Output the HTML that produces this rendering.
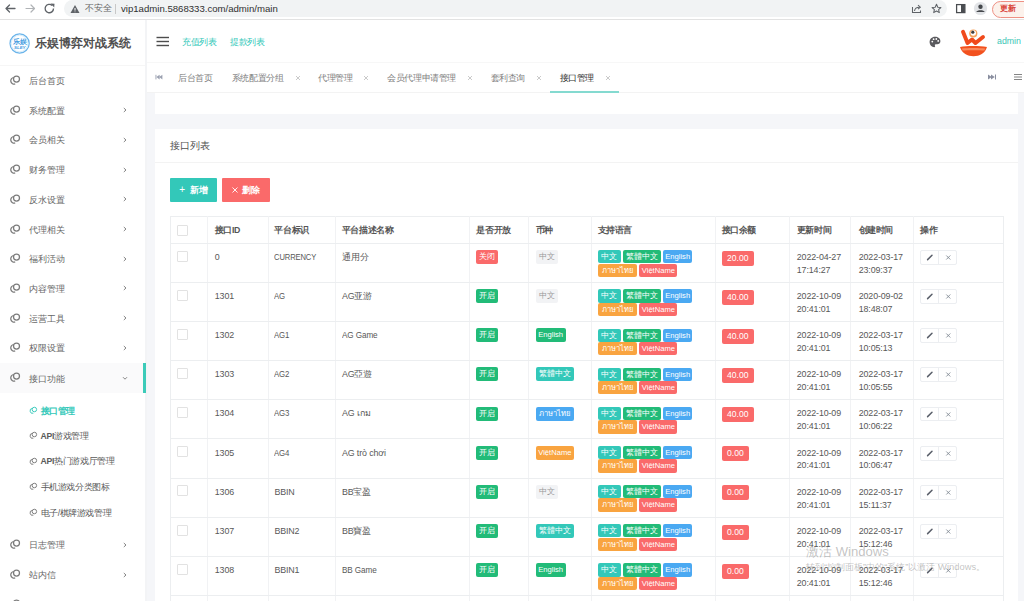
<!DOCTYPE html><html><head><meta charset="utf-8"><style>
html,body{margin:0;padding:0;width:1024px;height:601px;overflow:hidden;background:#fff;font-family:"Liberation Sans", sans-serif;}
#root{position:absolute;left:0;top:0;width:1024px;height:601px;overflow:hidden;}
.t{position:absolute;white-space:nowrap;}
.b{position:absolute;box-sizing:border-box;}
.tag{position:absolute;box-sizing:border-box;color:#fff;text-align:center;white-space:nowrap;border-radius:2px;}
svg{position:absolute;}
</style></head><body><div id="root">
<div class="b" style="left:0px;top:0px;width:1024.00px;height:20.00px;background:#fff;border-bottom:1px solid #e2e2e2;"></div>
<div class="b" style="left:64px;top:0px;width:883.00px;height:17.00px;background:#f1f3f4;border-radius:0 0 9px 9px;border-radius:9px;"></div>
<svg style="left:0;top:0" width="64" height="20"><g stroke="#5f6368" stroke-width="1.3" fill="none" stroke-linecap="round"><path d="M6 8.5 H15 M6 8.5 L9.5 5 M6 8.5 L9.5 12"/></g><g stroke="#b0b3b6" stroke-width="1.2" fill="none" stroke-linecap="round"><path d="M26 8.5 H34.5 M34.5 8.5 L31 5 M34.5 8.5 L31 12"/></g><g stroke="#5f6368" stroke-width="1.4" fill="none"><path d="M53.5 8.5 A4.2 4.2 0 1 1 52.2 5.5"/></g><path d="M50.5 3.5 L54.5 3.8 L54.2 7.5 Z" fill="#5f6368"/></svg>
<svg style="left:68px;top:2px" width="14" height="14"><path d="M7 3 L11.5 11 H2.5 Z" fill="#5f6368"/><path d="M7 6 V8.6 M7 9.6 V10.2" stroke="#fff" stroke-width="1"/></svg>
<div class="t" style="left:85px;top:2.00px;height:13.60px;line-height:13.60px;font-size:8.5px;color:#666;font-weight:normal;">不安全</div>
<div class="b" style="left:115px;top:4px;width:1.00px;height:9.50px;background:#c8c8c8;"></div>
<div class="t" style="left:121px;top:1.12px;height:15.36px;line-height:15.36px;font-size:9.6px;color:#303030;font-weight:normal;">vip1admin.5868333.com/admin/main</div>
<svg style="left:905px;top:0" width="119" height="20"><g stroke="#5f6368" stroke-width="1.05" fill="none"><path d="M7.5 7 V12.5 H15.5 V10.5"/><path d="M9.5 11 C9.8 8.3 11.5 7.2 14.5 7.2"/><path d="M13 5.2 L15.3 7.2 L13 9.2"/></g><path d="M31.5 4.3 L32.8 7.2 L35.9 7.5 L33.6 9.6 L34.3 12.6 L31.5 11 L28.7 12.6 L29.4 9.6 L27.1 7.5 L30.2 7.2 Z" stroke="#5f6368" stroke-width="1.05" fill="none" stroke-linejoin="round"/><rect x="51.6" y="4.6" width="8.3" height="8" stroke="#4a4d51" stroke-width="1.25" fill="none"/><rect x="56" y="4.6" width="3.9" height="8" fill="#4a4d51"/><circle cx="75.5" cy="8.5" r="6.6" fill="#e2e4e7"/><circle cx="75.5" cy="6.8" r="2.2" fill="#45484c"/><path d="M71.3 12 C71.8 9.6 79.2 9.6 79.7 12 Z" fill="#45484c"/></svg>
<div class="b" style="left:992px;top:0.5px;width:68.00px;height:17.00px;background:#fcf2ec;border:1.3px solid #ee9184;border-radius:9px;"></div>
<div class="t" style="left:1000px;top:2.34px;height:13.12px;line-height:13.12px;font-size:8.2px;color:#d9453a;font-weight:bold;">更新</div>
<div class="b" style="left:0px;top:20px;width:146.00px;height:581.00px;background:#fff;"></div>
<div class="b" style="left:145px;top:20px;width:2.00px;height:581.00px;background:#f3f4f6;"></div>
<div class="b" style="left:0px;top:65px;width:145.00px;height:1.00px;background:#f6f6f6;"></div>
<svg style="left:8px;top:32px" width="24" height="24"><circle cx="11.6" cy="11.5" r="9.6" fill="#fff" stroke="#6ab4ea" stroke-width="1.2"/><circle cx="11.6" cy="11.5" r="8.3" fill="none" stroke="#bfe0f7" stroke-width="0.6"/><text x="11.8" y="11.6" font-size="6.6" text-anchor="middle" fill="#3f9be0" font-weight="bold">乐娱</text><text x="11.8" y="16.9" font-size="4.4" text-anchor="middle" fill="#3f9be0" font-weight="bold" font-style="italic">SLEY</text></svg>
<div class="t" style="left:35px;top:33.54px;height:19.52px;line-height:19.52px;font-size:12.2px;color:#505050;font-weight:bold;">乐娱博弈对战系统</div>
<svg style="left:7.5px;top:72.5px" width="16" height="16"><g fill="none" stroke="#7c7c7c" stroke-width="1.25"><circle cx="8.50" cy="6.00" r="3.00"/><path d="M5.77 4.50 A3.30 3.30 0 1 0 7.19 10.89"/></g></svg>
<div class="t" style="left:29.2px;top:74.52px;height:13.76px;line-height:13.76px;font-size:8.6px;color:#666;font-weight:normal;letter-spacing:-0.2px;">后台首页</div>
<svg style="left:7.5px;top:102.5px" width="16" height="16"><g fill="none" stroke="#7c7c7c" stroke-width="1.25"><circle cx="8.50" cy="6.00" r="3.00"/><path d="M5.77 4.50 A3.30 3.30 0 1 0 7.19 10.89"/></g></svg>
<div class="t" style="left:29.2px;top:104.52px;height:13.76px;line-height:13.76px;font-size:8.6px;color:#666;font-weight:normal;letter-spacing:-0.2px;">系统配置</div>
<svg style="left:121px;top:106.0px" width="8" height="8"><path d="M2.8 2 L5 4 L2.8 6" stroke="#777" stroke-width="0.9" fill="none"/></svg>
<svg style="left:7.5px;top:132.2px" width="16" height="16"><g fill="none" stroke="#7c7c7c" stroke-width="1.25"><circle cx="8.50" cy="6.00" r="3.00"/><path d="M5.77 4.50 A3.30 3.30 0 1 0 7.19 10.89"/></g></svg>
<div class="t" style="left:29.2px;top:134.22px;height:13.76px;line-height:13.76px;font-size:8.6px;color:#666;font-weight:normal;letter-spacing:-0.2px;">会员相关</div>
<svg style="left:121px;top:135.7px" width="8" height="8"><path d="M2.8 2 L5 4 L2.8 6" stroke="#777" stroke-width="0.9" fill="none"/></svg>
<svg style="left:7.5px;top:162px" width="16" height="16"><g fill="none" stroke="#7c7c7c" stroke-width="1.25"><circle cx="8.50" cy="6.00" r="3.00"/><path d="M5.77 4.50 A3.30 3.30 0 1 0 7.19 10.89"/></g></svg>
<div class="t" style="left:29.2px;top:164.02px;height:13.76px;line-height:13.76px;font-size:8.6px;color:#666;font-weight:normal;letter-spacing:-0.2px;">财务管理</div>
<svg style="left:121px;top:165.5px" width="8" height="8"><path d="M2.8 2 L5 4 L2.8 6" stroke="#777" stroke-width="0.9" fill="none"/></svg>
<svg style="left:7.5px;top:191.8px" width="16" height="16"><g fill="none" stroke="#7c7c7c" stroke-width="1.25"><circle cx="8.50" cy="6.00" r="3.00"/><path d="M5.77 4.50 A3.30 3.30 0 1 0 7.19 10.89"/></g></svg>
<div class="t" style="left:29.2px;top:193.82px;height:13.76px;line-height:13.76px;font-size:8.6px;color:#666;font-weight:normal;letter-spacing:-0.2px;">反水设置</div>
<svg style="left:121px;top:195.3px" width="8" height="8"><path d="M2.8 2 L5 4 L2.8 6" stroke="#777" stroke-width="0.9" fill="none"/></svg>
<svg style="left:7.5px;top:221.5px" width="16" height="16"><g fill="none" stroke="#7c7c7c" stroke-width="1.25"><circle cx="8.50" cy="6.00" r="3.00"/><path d="M5.77 4.50 A3.30 3.30 0 1 0 7.19 10.89"/></g></svg>
<div class="t" style="left:29.2px;top:223.52px;height:13.76px;line-height:13.76px;font-size:8.6px;color:#666;font-weight:normal;letter-spacing:-0.2px;">代理相关</div>
<svg style="left:121px;top:225.0px" width="8" height="8"><path d="M2.8 2 L5 4 L2.8 6" stroke="#777" stroke-width="0.9" fill="none"/></svg>
<svg style="left:7.5px;top:251.2px" width="16" height="16"><g fill="none" stroke="#7c7c7c" stroke-width="1.25"><circle cx="8.50" cy="6.00" r="3.00"/><path d="M5.77 4.50 A3.30 3.30 0 1 0 7.19 10.89"/></g></svg>
<div class="t" style="left:29.2px;top:253.22px;height:13.76px;line-height:13.76px;font-size:8.6px;color:#666;font-weight:normal;letter-spacing:-0.2px;">福利活动</div>
<svg style="left:121px;top:254.7px" width="8" height="8"><path d="M2.8 2 L5 4 L2.8 6" stroke="#777" stroke-width="0.9" fill="none"/></svg>
<svg style="left:7.5px;top:280.9px" width="16" height="16"><g fill="none" stroke="#7c7c7c" stroke-width="1.25"><circle cx="8.50" cy="6.00" r="3.00"/><path d="M5.77 4.50 A3.30 3.30 0 1 0 7.19 10.89"/></g></svg>
<div class="t" style="left:29.2px;top:282.92px;height:13.76px;line-height:13.76px;font-size:8.6px;color:#666;font-weight:normal;letter-spacing:-0.2px;">内容管理</div>
<svg style="left:121px;top:284.4px" width="8" height="8"><path d="M2.8 2 L5 4 L2.8 6" stroke="#777" stroke-width="0.9" fill="none"/></svg>
<svg style="left:7.5px;top:310.5px" width="16" height="16"><g fill="none" stroke="#7c7c7c" stroke-width="1.25"><circle cx="8.50" cy="6.00" r="3.00"/><path d="M5.77 4.50 A3.30 3.30 0 1 0 7.19 10.89"/></g></svg>
<div class="t" style="left:29.2px;top:312.52px;height:13.76px;line-height:13.76px;font-size:8.6px;color:#666;font-weight:normal;letter-spacing:-0.2px;">运营工具</div>
<svg style="left:121px;top:314.0px" width="8" height="8"><path d="M2.8 2 L5 4 L2.8 6" stroke="#777" stroke-width="0.9" fill="none"/></svg>
<svg style="left:7.5px;top:340.2px" width="16" height="16"><g fill="none" stroke="#7c7c7c" stroke-width="1.25"><circle cx="8.50" cy="6.00" r="3.00"/><path d="M5.77 4.50 A3.30 3.30 0 1 0 7.19 10.89"/></g></svg>
<div class="t" style="left:29.2px;top:342.22px;height:13.76px;line-height:13.76px;font-size:8.6px;color:#666;font-weight:normal;letter-spacing:-0.2px;">权限设置</div>
<svg style="left:121px;top:343.7px" width="8" height="8"><path d="M2.8 2 L5 4 L2.8 6" stroke="#777" stroke-width="0.9" fill="none"/></svg>
<div class="b" style="left:0px;top:362.8px;width:145.00px;height:29.80px;background:#fafafb;"></div>
<div class="b" style="left:143.4px;top:362.8px;width:2.30px;height:29.80px;background:#3ccbb9;"></div>
<svg style="left:7.5px;top:370.3px" width="16" height="16"><g fill="none" stroke="#7c7c7c" stroke-width="1.25"><circle cx="8.50" cy="6.00" r="3.00"/><path d="M5.77 4.50 A3.30 3.30 0 1 0 7.19 10.89"/></g></svg>
<div class="t" style="left:29.2px;top:373.02px;height:13.76px;line-height:13.76px;font-size:8.6px;color:#666;font-weight:normal;letter-spacing:-0.2px;">接口功能</div>
<svg style="left:121.3px;top:374px" width="8" height="8"><path d="M2 3.2 L4 5.2 L6 3.2" stroke="#777" stroke-width="0.9" fill="none"/></svg>
<svg style="left:25.5px;top:403px" width="16" height="16"><g fill="none" stroke="#33c8b9" stroke-width="0.94"><circle cx="8.38" cy="6.50" r="2.25"/><path d="M6.33 5.38 A2.47 2.47 0 1 0 7.39 10.17"/></g></svg>
<div class="t" style="left:40.5px;top:404.58px;height:13.84px;line-height:13.84px;font-size:8.65px;color:#33c8b9;font-weight:bold;letter-spacing:-0.4px;">接口管理</div>
<svg style="left:25.5px;top:428.3px" width="16" height="16"><g fill="none" stroke="#777" stroke-width="0.94"><circle cx="8.38" cy="6.50" r="2.25"/><path d="M6.33 5.38 A2.47 2.47 0 1 0 7.39 10.17"/></g></svg>
<div class="t" style="left:40.5px;top:429.88px;height:13.84px;line-height:13.84px;font-size:8.65px;color:#5a5a5a;font-weight:normal;letter-spacing:-0.4px;"><span style="letter-spacing:-0.2px;font-weight:bold">API</span>游戏管理</div>
<svg style="left:25.5px;top:453.5px" width="16" height="16"><g fill="none" stroke="#777" stroke-width="0.94"><circle cx="8.38" cy="6.50" r="2.25"/><path d="M6.33 5.38 A2.47 2.47 0 1 0 7.39 10.17"/></g></svg>
<div class="t" style="left:40.5px;top:455.08px;height:13.84px;line-height:13.84px;font-size:8.65px;color:#5a5a5a;font-weight:normal;letter-spacing:-0.4px;"><span style="letter-spacing:-0.2px;font-weight:bold">API</span>热门游戏厅管理</div>
<svg style="left:25.5px;top:479px" width="16" height="16"><g fill="none" stroke="#777" stroke-width="0.94"><circle cx="8.38" cy="6.50" r="2.25"/><path d="M6.33 5.38 A2.47 2.47 0 1 0 7.39 10.17"/></g></svg>
<div class="t" style="left:40.5px;top:480.58px;height:13.84px;line-height:13.84px;font-size:8.65px;color:#5a5a5a;font-weight:normal;letter-spacing:-0.4px;">手机游戏分类图标</div>
<svg style="left:25.5px;top:505px" width="16" height="16"><g fill="none" stroke="#777" stroke-width="0.94"><circle cx="8.38" cy="6.50" r="2.25"/><path d="M6.33 5.38 A2.47 2.47 0 1 0 7.39 10.17"/></g></svg>
<div class="t" style="left:40.5px;top:506.58px;height:13.84px;line-height:13.84px;font-size:8.65px;color:#5a5a5a;font-weight:normal;letter-spacing:-0.4px;">电子/棋牌游戏管理</div>
<svg style="left:7.5px;top:537.2px" width="16" height="16"><g fill="none" stroke="#7c7c7c" stroke-width="1.25"><circle cx="8.50" cy="6.00" r="3.00"/><path d="M5.77 4.50 A3.30 3.30 0 1 0 7.19 10.89"/></g></svg>
<div class="t" style="left:29.2px;top:539.22px;height:13.76px;line-height:13.76px;font-size:8.6px;color:#666;font-weight:normal;letter-spacing:-0.2px;">日志管理</div>
<svg style="left:121px;top:540.7px" width="8" height="8"><path d="M2.8 2 L5 4 L2.8 6" stroke="#777" stroke-width="0.9" fill="none"/></svg>
<svg style="left:7.5px;top:567px" width="16" height="16"><g fill="none" stroke="#7c7c7c" stroke-width="1.25"><circle cx="8.50" cy="6.00" r="3.00"/><path d="M5.77 4.50 A3.30 3.30 0 1 0 7.19 10.89"/></g></svg>
<div class="t" style="left:29.2px;top:569.02px;height:13.76px;line-height:13.76px;font-size:8.6px;color:#666;font-weight:normal;letter-spacing:-0.2px;">站内信</div>
<svg style="left:121px;top:570.5px" width="8" height="8"><path d="M2.8 2 L5 4 L2.8 6" stroke="#777" stroke-width="0.9" fill="none"/></svg>
<svg style="left:7.5px;top:596.8px" width="16" height="16"><g fill="none" stroke="#7c7c7c" stroke-width="1.25"><circle cx="8.50" cy="6.00" r="3.00"/><path d="M5.77 4.50 A3.30 3.30 0 1 0 7.19 10.89"/></g></svg>
<div class="b" style="left:146.5px;top:62.3px;width:877.50px;height:1.20px;background:#f7f7f7;"></div>
<svg style="left:154px;top:34px" width="18" height="14"><g stroke="#4d4d4d" stroke-width="1.4"><path d="M2.5 3.5 H15"/><path d="M2.5 7.5 H15"/><path d="M2.5 11.5 H15"/></g></svg>
<div class="t" style="left:182px;top:35.52px;height:13.76px;line-height:13.76px;font-size:8.6px;color:#33c8b9;font-weight:normal;letter-spacing:-0.4px;">充值列表</div>
<div class="t" style="left:230px;top:35.52px;height:13.76px;line-height:13.76px;font-size:8.6px;color:#33c8b9;font-weight:normal;letter-spacing:-0.4px;">提款列表</div>
<svg style="left:928px;top:35px" width="14" height="14"><path d="M7 1.8 C3.8 1.8 1.6 4.2 1.6 7 C1.6 9.9 3.8 12.2 6.3 12.2 C7.3 12.2 7.3 11.2 6.9 10.6 C6.5 10 6.9 9.2 7.8 9.2 H9.3 C11 9.2 12.4 8 12.4 6.2 C12.4 3.6 10 1.8 7 1.8 Z" fill="#5a5a5e"/><circle cx="4.3" cy="6.6" r="0.9" fill="#fff"/><circle cx="5.6" cy="4.2" r="0.9" fill="#fff"/><circle cx="8.3" cy="4" r="0.9" fill="#fff"/><circle cx="10.2" cy="5.9" r="0.9" fill="#fff"/></svg>
<svg style="left:956px;top:27px" width="34" height="32"><path d="M7 4.8 L11.5 16 L16 12.5 L19.5 16 L27 10" stroke="#f04a1c" stroke-width="3.9" fill="none" stroke-linecap="round" stroke-linejoin="round"/><circle cx="17.3" cy="6.5" r="4.1" fill="#f7a35c"/><circle cx="17.3" cy="6" r="2.7" fill="#fff"/><circle cx="16.8" cy="5.2" r="1.6" fill="#3d3d3d"/><path d="M4 20 C11 18.8 23 18.8 31 20 C29 26.5 23.5 29.2 17.5 29.2 C11.5 29.2 6 26.5 4 20 Z" fill="#f2511e"/><path d="M6 21.6 C12 20.8 23 20.8 29 21.6 L28.5 23.6 C23 23 12 23 6.5 23.6 Z" fill="#f98a5e"/></svg>
<div class="t" style="left:997px;top:34.46px;height:14.08px;line-height:14.08px;font-size:8.8px;color:#3cc6b6;font-weight:normal;">admin</div>
<div class="b" style="left:147px;top:63.5px;width:877.00px;height:28.50px;background:#fff;"></div>
<div class="b" style="left:146.5px;top:91.5px;width:877.50px;height:1.00px;background:#f3f3f3;"></div>
<svg style="left:153px;top:73px" width="12" height="9"><g fill="#9aa0b0"><rect x="2.5" y="1.8" width="0.9" height="4.6"/><path d="M6.6 1.8 L3.4 4.1 L6.6 6.4 Z"/><path d="M9.4 1.8 L6.2 4.1 L9.4 6.4 Z"/></g></svg>
<div class="t" style="left:178px;top:71.92px;height:13.76px;line-height:13.76px;font-size:8.6px;color:#808080;font-weight:normal;letter-spacing:-0.42px;">后台首页</div>
<div class="t" style="left:231.8px;top:71.92px;height:13.76px;line-height:13.76px;font-size:8.6px;color:#808080;font-weight:normal;letter-spacing:-0.42px;">系统配置分组</div>
<svg style="left:294.7px;top:74.5px" width="6" height="6"><path d="M1 1 L5 5 M5 1 L1 5" stroke="#b8b8b8" stroke-width="0.75"/></svg>
<div class="t" style="left:318px;top:71.92px;height:13.76px;line-height:13.76px;font-size:8.6px;color:#808080;font-weight:normal;letter-spacing:-0.42px;">代理管理</div>
<svg style="left:363px;top:74.5px" width="6" height="6"><path d="M1 1 L5 5 M5 1 L1 5" stroke="#b8b8b8" stroke-width="0.75"/></svg>
<div class="t" style="left:387.3px;top:71.92px;height:13.76px;line-height:13.76px;font-size:8.6px;color:#808080;font-weight:normal;letter-spacing:-0.42px;">会员代理申请管理</div>
<svg style="left:467px;top:74.5px" width="6" height="6"><path d="M1 1 L5 5 M5 1 L1 5" stroke="#b8b8b8" stroke-width="0.75"/></svg>
<div class="t" style="left:490.7px;top:71.92px;height:13.76px;line-height:13.76px;font-size:8.6px;color:#808080;font-weight:normal;letter-spacing:-0.42px;">套利查询</div>
<svg style="left:536px;top:74.5px" width="6" height="6"><path d="M1 1 L5 5 M5 1 L1 5" stroke="#b8b8b8" stroke-width="0.75"/></svg>
<div class="t" style="left:559.6px;top:71.92px;height:13.76px;line-height:13.76px;font-size:8.6px;color:#333;font-weight:normal;letter-spacing:-0.42px;">接口管理</div>
<svg style="left:604.5px;top:74.5px" width="6" height="6"><path d="M1 1 L5 5 M5 1 L1 5" stroke="#b8b8b8" stroke-width="0.75"/></svg>
<div class="b" style="left:550px;top:91px;width:68.50px;height:1.80px;background:#84dad0;"></div>
<svg style="left:986px;top:73px" width="12" height="9"><g fill="#8a8fa0"><rect x="9" y="1.5" width="1" height="5"/><path d="M5 1.5 L8.8 4 L5 6.5 Z"/><path d="M2 1.5 L5.8 4 L2 6.5 Z"/></g></svg>
<svg style="left:1012px;top:72px" width="12" height="10"><g stroke="#777" stroke-width="0.9"><path d="M2 2.5 H10 M2 5 H10 M2 7.5 H10"/></g></svg>
<div class="b" style="left:146.5px;top:92.5px;width:877.50px;height:508.50px;background:#f5f6f9;"></div>
<div class="b" style="left:155px;top:92.5px;width:863.00px;height:21.50px;background:#fff;"></div>
<div class="b" style="left:155px;top:129px;width:863.00px;height:521.00px;background:#fff;"></div>
<div class="t" style="left:170px;top:138.30px;height:16.00px;line-height:16.00px;font-size:10px;color:#505050;font-weight:normal;">接口列表</div>
<div class="b" style="left:155px;top:161.6px;width:863.00px;height:1.00px;background:#f3f3f3;"></div>
<div class="b" style="left:170px;top:178px;width:46.60px;height:23.60px;background:#33c8b9;border-radius:1px;"></div>
<div class="t" style="left:179.2px;top:181.60px;height:16.00px;line-height:16.00px;font-size:10px;color:#fff;font-weight:normal;">+</div>
<div class="t" style="left:190px;top:182.76px;height:14.08px;line-height:14.08px;font-size:8.8px;color:#fff;font-weight:bold;">新增</div>
<div class="b" style="left:222.4px;top:178px;width:47.20px;height:23.60px;background:#fa6a6a;border-radius:1px;"></div>
<svg style="left:230.5px;top:185.8px" width="8" height="8"><path d="M1.5 1.5 L6.5 6.5 M6.5 1.5 L1.5 6.5" stroke="#fff" stroke-width="0.9"/></svg>
<div class="t" style="left:242px;top:182.76px;height:14.08px;line-height:14.08px;font-size:8.8px;color:#fff;font-weight:bold;">删除</div>
<div class="b" style="left:170px;top:216.2px;width:834.40px;height:433.80px;border:1px solid #eceef0;border-bottom:none;"></div>
<div class="b" style="left:207.2px;top:216.2px;width:1.00px;height:433.80px;background:#f1f2f4;"></div>
<div class="b" style="left:267.9px;top:216.2px;width:1.00px;height:433.80px;background:#f1f2f4;"></div>
<div class="b" style="left:334.9px;top:216.2px;width:1.00px;height:433.80px;background:#f1f2f4;"></div>
<div class="b" style="left:469.1px;top:216.2px;width:1.00px;height:433.80px;background:#f1f2f4;"></div>
<div class="b" style="left:528.0px;top:216.2px;width:1.00px;height:433.80px;background:#f1f2f4;"></div>
<div class="b" style="left:590.6px;top:216.2px;width:1.00px;height:433.80px;background:#f1f2f4;"></div>
<div class="b" style="left:715.2px;top:216.2px;width:1.00px;height:433.80px;background:#f1f2f4;"></div>
<div class="b" style="left:788.8px;top:216.2px;width:1.00px;height:433.80px;background:#f1f2f4;"></div>
<div class="b" style="left:850.45px;top:216.2px;width:1.00px;height:433.80px;background:#f1f2f4;"></div>
<div class="b" style="left:913.4px;top:216.2px;width:1.00px;height:433.80px;background:#f1f2f4;"></div>
<div class="b" style="left:170px;top:242.8px;width:834.40px;height:1.00px;background:#eceef0;"></div>
<div class="b" style="left:170px;top:281.93px;width:834.40px;height:1.00px;background:#eceef0;"></div>
<div class="b" style="left:170px;top:321.06px;width:834.40px;height:1.00px;background:#eceef0;"></div>
<div class="b" style="left:170px;top:360.19000000000005px;width:834.40px;height:1.00px;background:#eceef0;"></div>
<div class="b" style="left:170px;top:399.32000000000005px;width:834.40px;height:1.00px;background:#eceef0;"></div>
<div class="b" style="left:170px;top:438.45000000000005px;width:834.40px;height:1.00px;background:#eceef0;"></div>
<div class="b" style="left:170px;top:477.58000000000004px;width:834.40px;height:1.00px;background:#eceef0;"></div>
<div class="b" style="left:170px;top:516.71px;width:834.40px;height:1.00px;background:#eceef0;"></div>
<div class="b" style="left:170px;top:555.84px;width:834.40px;height:1.00px;background:#eceef0;"></div>
<div class="b" style="left:170px;top:594.97px;width:834.40px;height:1.00px;background:#eceef0;"></div>
<div class="b" style="left:176.7px;top:224.8px;width:11.00px;height:11.00px;border:1px solid #e2e2e2;background:#fff;border-radius:1px;"></div>
<div class="t" style="left:214.8px;top:223.00px;height:14.00px;line-height:14.00px;font-size:8.75px;color:#555;font-weight:bold;letter-spacing:-0.4px;">接口ID</div>
<div class="t" style="left:274.4px;top:223.00px;height:14.00px;line-height:14.00px;font-size:8.75px;color:#555;font-weight:bold;letter-spacing:-0.4px;">平台标识</div>
<div class="t" style="left:341.9px;top:223.00px;height:14.00px;line-height:14.00px;font-size:8.75px;color:#555;font-weight:bold;letter-spacing:-0.4px;">平台描述名称</div>
<div class="t" style="left:476.4px;top:223.00px;height:14.00px;line-height:14.00px;font-size:8.75px;color:#555;font-weight:bold;letter-spacing:-0.4px;">是否开放</div>
<div class="t" style="left:535.8px;top:223.00px;height:14.00px;line-height:14.00px;font-size:8.75px;color:#555;font-weight:bold;letter-spacing:-0.4px;">币种</div>
<div class="t" style="left:597.5px;top:223.00px;height:14.00px;line-height:14.00px;font-size:8.75px;color:#555;font-weight:bold;letter-spacing:-0.4px;">支持语言</div>
<div class="t" style="left:721.5px;top:223.00px;height:14.00px;line-height:14.00px;font-size:8.75px;color:#555;font-weight:bold;letter-spacing:-0.4px;">接口余额</div>
<div class="t" style="left:796.8px;top:223.00px;height:14.00px;line-height:14.00px;font-size:8.75px;color:#555;font-weight:bold;letter-spacing:-0.4px;">更新时间</div>
<div class="t" style="left:858.7px;top:223.00px;height:14.00px;line-height:14.00px;font-size:8.75px;color:#555;font-weight:bold;letter-spacing:-0.4px;">创建时间</div>
<div class="t" style="left:920.2px;top:223.00px;height:14.00px;line-height:14.00px;font-size:8.75px;color:#555;font-weight:bold;letter-spacing:-0.4px;">操作</div>
<div class="b" style="left:176.7px;top:250.60000000000002px;width:11.00px;height:11.00px;border:1px solid #e2e2e2;background:#fff;border-radius:1px;"></div>
<div class="t" style="left:214.8px;top:249.88px;height:14.24px;line-height:14.24px;font-size:8.9px;color:#585858;font-weight:normal;letter-spacing:-0.12px;">0</div>
<div class="t" style="left:274.4px;top:249.88px;height:14.24px;line-height:14.24px;font-size:8.9px;color:#585858;font-weight:normal;letter-spacing:-0.12px;transform:scaleX(0.855);transform-origin:0 0;">CURRENCY</div>
<div class="t" style="left:341.9px;top:249.88px;height:14.24px;line-height:14.24px;font-size:8.9px;color:#585858;font-weight:normal;letter-spacing:-0.12px;">通用分</div>
<div class="tag" style="left:476px;top:250.00px;width:22.40px;height:14.00px;line-height:14.00px;font-size:7.6px;background:#fa6a6a;color:#fff;">关闭</div>
<div class="tag" style="left:535.5px;top:250.00px;width:22.50px;height:14.00px;line-height:14.00px;font-size:7.6px;background:#f2f3f5;color:#999;">中文</div>
<div class="tag" style="left:597.5px;top:250.30px;width:23.20px;height:13.20px;line-height:13.20px;font-size:7.6px;background:#33c8b9;color:#fff;">中文</div>
<div class="tag" style="left:622.9px;top:250.30px;width:38.00px;height:13.20px;line-height:13.20px;font-size:7.6px;background:#22bb78;color:#fff;">繁體中文</div>
<div class="tag" style="left:663px;top:250.30px;width:29.40px;height:13.20px;line-height:13.20px;font-size:7.6px;background:#4aa9f2;color:#fff;">English</div>
<div class="tag" style="left:597.5px;top:263.60px;width:39.30px;height:13.40px;line-height:13.40px;font-size:7.6px;background:#f9a440;color:#fff;">ภาษาไทย</div>
<div class="tag" style="left:639.3px;top:263.60px;width:38.20px;height:13.40px;line-height:13.40px;font-size:7.6px;background:#fa6a6a;color:#fff;">ViệtName</div>
<div class="tag" style="left:721.5px;top:250.60px;width:32.50px;height:15.00px;line-height:15.00px;font-size:8.6px;background:#fa6a6a;color:#fff;">20.00</div>
<div class="t" style="left:796.8px;top:249.88px;height:14.24px;line-height:14.24px;font-size:8.9px;color:#585858;font-weight:normal;letter-spacing:-0.12px;">2022-04-27</div>
<div class="t" style="left:796.8px;top:262.78px;height:14.24px;line-height:14.24px;font-size:8.9px;color:#585858;font-weight:normal;letter-spacing:-0.12px;">17:14:27</div>
<div class="t" style="left:858.7px;top:249.88px;height:14.24px;line-height:14.24px;font-size:8.9px;color:#585858;font-weight:normal;letter-spacing:-0.12px;">2022-03-17</div>
<div class="t" style="left:858.7px;top:262.78px;height:14.24px;line-height:14.24px;font-size:8.9px;color:#585858;font-weight:normal;letter-spacing:-0.12px;">23:09:37</div>
<div class="b" style="left:920.4px;top:250.10000000000002px;width:37.10px;height:14.80px;border:1px solid #eceef1;border-radius:2px;background:#fff;"></div>
<div class="b" style="left:938.3px;top:250.10000000000002px;width:1.00px;height:14.80px;background:#eceef1;"></div>
<svg style="left:920px;top:250.10px" width="38" height="15"><path d="M7.6 9.6 L12 5.2" stroke="#5a5f6a" stroke-width="1.5" stroke-linecap="round"/><path d="M26.3 5.5 L30.3 9.5 M30.3 5.5 L26.3 9.5" stroke="#7d8590" stroke-width="0.85"/></svg>
<div class="b" style="left:176.7px;top:289.73px;width:11.00px;height:11.00px;border:1px solid #e2e2e2;background:#fff;border-radius:1px;"></div>
<div class="t" style="left:214.8px;top:289.01px;height:14.24px;line-height:14.24px;font-size:8.9px;color:#585858;font-weight:normal;letter-spacing:-0.12px;">1301</div>
<div class="t" style="left:274.4px;top:289.01px;height:14.24px;line-height:14.24px;font-size:8.9px;color:#585858;font-weight:normal;letter-spacing:-0.12px;transform:scaleX(0.88);transform-origin:0 0;">AG</div>
<div class="t" style="left:341.9px;top:289.01px;height:14.24px;line-height:14.24px;font-size:8.9px;color:#585858;font-weight:normal;letter-spacing:-0.12px;">AG亚游</div>
<div class="tag" style="left:476px;top:289.13px;width:22.40px;height:14.00px;line-height:14.00px;font-size:7.6px;background:#22bb78;color:#fff;">开启</div>
<div class="tag" style="left:535.5px;top:289.13px;width:22.50px;height:14.00px;line-height:14.00px;font-size:7.6px;background:#f2f3f5;color:#999;">中文</div>
<div class="tag" style="left:597.5px;top:289.43px;width:23.20px;height:13.20px;line-height:13.20px;font-size:7.6px;background:#33c8b9;color:#fff;">中文</div>
<div class="tag" style="left:622.9px;top:289.43px;width:38.00px;height:13.20px;line-height:13.20px;font-size:7.6px;background:#22bb78;color:#fff;">繁體中文</div>
<div class="tag" style="left:663px;top:289.43px;width:29.40px;height:13.20px;line-height:13.20px;font-size:7.6px;background:#4aa9f2;color:#fff;">English</div>
<div class="tag" style="left:597.5px;top:302.73px;width:39.30px;height:13.40px;line-height:13.40px;font-size:7.6px;background:#f9a440;color:#fff;">ภาษาไทย</div>
<div class="tag" style="left:639.3px;top:302.73px;width:38.20px;height:13.40px;line-height:13.40px;font-size:7.6px;background:#fa6a6a;color:#fff;">ViệtName</div>
<div class="tag" style="left:721.5px;top:289.73px;width:32.50px;height:15.00px;line-height:15.00px;font-size:8.6px;background:#fa6a6a;color:#fff;">40.00</div>
<div class="t" style="left:796.8px;top:289.01px;height:14.24px;line-height:14.24px;font-size:8.9px;color:#585858;font-weight:normal;letter-spacing:-0.12px;">2022-10-09</div>
<div class="t" style="left:796.8px;top:301.91px;height:14.24px;line-height:14.24px;font-size:8.9px;color:#585858;font-weight:normal;letter-spacing:-0.12px;">20:41:01</div>
<div class="t" style="left:858.7px;top:289.01px;height:14.24px;line-height:14.24px;font-size:8.9px;color:#585858;font-weight:normal;letter-spacing:-0.12px;">2020-09-02</div>
<div class="t" style="left:858.7px;top:301.91px;height:14.24px;line-height:14.24px;font-size:8.9px;color:#585858;font-weight:normal;letter-spacing:-0.12px;">18:48:07</div>
<div class="b" style="left:920.4px;top:289.23px;width:37.10px;height:14.80px;border:1px solid #eceef1;border-radius:2px;background:#fff;"></div>
<div class="b" style="left:938.3px;top:289.23px;width:1.00px;height:14.80px;background:#eceef1;"></div>
<svg style="left:920px;top:289.23px" width="38" height="15"><path d="M7.6 9.6 L12 5.2" stroke="#5a5f6a" stroke-width="1.5" stroke-linecap="round"/><path d="M26.3 5.5 L30.3 9.5 M30.3 5.5 L26.3 9.5" stroke="#7d8590" stroke-width="0.85"/></svg>
<div class="b" style="left:176.7px;top:328.86px;width:11.00px;height:11.00px;border:1px solid #e2e2e2;background:#fff;border-radius:1px;"></div>
<div class="t" style="left:214.8px;top:328.14px;height:14.24px;line-height:14.24px;font-size:8.9px;color:#585858;font-weight:normal;letter-spacing:-0.12px;">1302</div>
<div class="t" style="left:274.4px;top:328.14px;height:14.24px;line-height:14.24px;font-size:8.9px;color:#585858;font-weight:normal;letter-spacing:-0.12px;transform:scaleX(0.88);transform-origin:0 0;">AG1</div>
<div class="t" style="left:341.9px;top:328.14px;height:14.24px;line-height:14.24px;font-size:8.9px;color:#585858;font-weight:normal;letter-spacing:-0.12px;transform:scaleX(0.92);transform-origin:0 0;">AG Game</div>
<div class="tag" style="left:476px;top:328.26px;width:22.40px;height:14.00px;line-height:14.00px;font-size:7.6px;background:#22bb78;color:#fff;">开启</div>
<div class="tag" style="left:535.5px;top:328.26px;width:30.30px;height:14.00px;line-height:14.00px;font-size:7.6px;background:#22bb78;color:#fff;">English</div>
<div class="tag" style="left:597.5px;top:328.56px;width:23.20px;height:13.20px;line-height:13.20px;font-size:7.6px;background:#33c8b9;color:#fff;">中文</div>
<div class="tag" style="left:622.9px;top:328.56px;width:38.00px;height:13.20px;line-height:13.20px;font-size:7.6px;background:#22bb78;color:#fff;">繁體中文</div>
<div class="tag" style="left:663px;top:328.56px;width:29.40px;height:13.20px;line-height:13.20px;font-size:7.6px;background:#4aa9f2;color:#fff;">English</div>
<div class="tag" style="left:597.5px;top:341.86px;width:39.30px;height:13.40px;line-height:13.40px;font-size:7.6px;background:#f9a440;color:#fff;">ภาษาไทย</div>
<div class="tag" style="left:639.3px;top:341.86px;width:38.20px;height:13.40px;line-height:13.40px;font-size:7.6px;background:#fa6a6a;color:#fff;">ViệtName</div>
<div class="tag" style="left:721.5px;top:328.86px;width:32.50px;height:15.00px;line-height:15.00px;font-size:8.6px;background:#fa6a6a;color:#fff;">40.00</div>
<div class="t" style="left:796.8px;top:328.14px;height:14.24px;line-height:14.24px;font-size:8.9px;color:#585858;font-weight:normal;letter-spacing:-0.12px;">2022-10-09</div>
<div class="t" style="left:796.8px;top:341.04px;height:14.24px;line-height:14.24px;font-size:8.9px;color:#585858;font-weight:normal;letter-spacing:-0.12px;">20:41:01</div>
<div class="t" style="left:858.7px;top:328.14px;height:14.24px;line-height:14.24px;font-size:8.9px;color:#585858;font-weight:normal;letter-spacing:-0.12px;">2022-03-17</div>
<div class="t" style="left:858.7px;top:341.04px;height:14.24px;line-height:14.24px;font-size:8.9px;color:#585858;font-weight:normal;letter-spacing:-0.12px;">10:05:13</div>
<div class="b" style="left:920.4px;top:328.36px;width:37.10px;height:14.80px;border:1px solid #eceef1;border-radius:2px;background:#fff;"></div>
<div class="b" style="left:938.3px;top:328.36px;width:1.00px;height:14.80px;background:#eceef1;"></div>
<svg style="left:920px;top:328.36px" width="38" height="15"><path d="M7.6 9.6 L12 5.2" stroke="#5a5f6a" stroke-width="1.5" stroke-linecap="round"/><path d="M26.3 5.5 L30.3 9.5 M30.3 5.5 L26.3 9.5" stroke="#7d8590" stroke-width="0.85"/></svg>
<div class="b" style="left:176.7px;top:367.99000000000007px;width:11.00px;height:11.00px;border:1px solid #e2e2e2;background:#fff;border-radius:1px;"></div>
<div class="t" style="left:214.8px;top:367.27px;height:14.24px;line-height:14.24px;font-size:8.9px;color:#585858;font-weight:normal;letter-spacing:-0.12px;">1303</div>
<div class="t" style="left:274.4px;top:367.27px;height:14.24px;line-height:14.24px;font-size:8.9px;color:#585858;font-weight:normal;letter-spacing:-0.12px;transform:scaleX(0.88);transform-origin:0 0;">AG2</div>
<div class="t" style="left:341.9px;top:367.27px;height:14.24px;line-height:14.24px;font-size:8.9px;color:#585858;font-weight:normal;letter-spacing:-0.12px;">AG亞遊</div>
<div class="tag" style="left:476px;top:367.39px;width:22.40px;height:14.00px;line-height:14.00px;font-size:7.6px;background:#22bb78;color:#fff;">开启</div>
<div class="tag" style="left:535.5px;top:367.39px;width:38.20px;height:14.00px;line-height:14.00px;font-size:7.6px;background:#33c8b9;color:#fff;">繁體中文</div>
<div class="tag" style="left:597.5px;top:367.69px;width:23.20px;height:13.20px;line-height:13.20px;font-size:7.6px;background:#33c8b9;color:#fff;">中文</div>
<div class="tag" style="left:622.9px;top:367.69px;width:38.00px;height:13.20px;line-height:13.20px;font-size:7.6px;background:#22bb78;color:#fff;">繁體中文</div>
<div class="tag" style="left:663px;top:367.69px;width:29.40px;height:13.20px;line-height:13.20px;font-size:7.6px;background:#4aa9f2;color:#fff;">English</div>
<div class="tag" style="left:597.5px;top:380.99px;width:39.30px;height:13.40px;line-height:13.40px;font-size:7.6px;background:#f9a440;color:#fff;">ภาษาไทย</div>
<div class="tag" style="left:639.3px;top:380.99px;width:38.20px;height:13.40px;line-height:13.40px;font-size:7.6px;background:#fa6a6a;color:#fff;">ViệtName</div>
<div class="tag" style="left:721.5px;top:367.99px;width:32.50px;height:15.00px;line-height:15.00px;font-size:8.6px;background:#fa6a6a;color:#fff;">40.00</div>
<div class="t" style="left:796.8px;top:367.27px;height:14.24px;line-height:14.24px;font-size:8.9px;color:#585858;font-weight:normal;letter-spacing:-0.12px;">2022-10-09</div>
<div class="t" style="left:796.8px;top:380.17px;height:14.24px;line-height:14.24px;font-size:8.9px;color:#585858;font-weight:normal;letter-spacing:-0.12px;">20:41:01</div>
<div class="t" style="left:858.7px;top:367.27px;height:14.24px;line-height:14.24px;font-size:8.9px;color:#585858;font-weight:normal;letter-spacing:-0.12px;">2022-03-17</div>
<div class="t" style="left:858.7px;top:380.17px;height:14.24px;line-height:14.24px;font-size:8.9px;color:#585858;font-weight:normal;letter-spacing:-0.12px;">10:05:55</div>
<div class="b" style="left:920.4px;top:367.49000000000007px;width:37.10px;height:14.80px;border:1px solid #eceef1;border-radius:2px;background:#fff;"></div>
<div class="b" style="left:938.3px;top:367.49000000000007px;width:1.00px;height:14.80px;background:#eceef1;"></div>
<svg style="left:920px;top:367.49px" width="38" height="15"><path d="M7.6 9.6 L12 5.2" stroke="#5a5f6a" stroke-width="1.5" stroke-linecap="round"/><path d="M26.3 5.5 L30.3 9.5 M30.3 5.5 L26.3 9.5" stroke="#7d8590" stroke-width="0.85"/></svg>
<div class="b" style="left:176.7px;top:407.12000000000006px;width:11.00px;height:11.00px;border:1px solid #e2e2e2;background:#fff;border-radius:1px;"></div>
<div class="t" style="left:214.8px;top:406.40px;height:14.24px;line-height:14.24px;font-size:8.9px;color:#585858;font-weight:normal;letter-spacing:-0.12px;">1304</div>
<div class="t" style="left:274.4px;top:406.40px;height:14.24px;line-height:14.24px;font-size:8.9px;color:#585858;font-weight:normal;letter-spacing:-0.12px;transform:scaleX(0.88);transform-origin:0 0;">AG3</div>
<div class="t" style="left:341.9px;top:406.40px;height:14.24px;line-height:14.24px;font-size:8.9px;color:#585858;font-weight:normal;letter-spacing:-0.12px;">AG เกม</div>
<div class="tag" style="left:476px;top:406.52px;width:22.40px;height:14.00px;line-height:14.00px;font-size:7.6px;background:#22bb78;color:#fff;">开启</div>
<div class="tag" style="left:535.5px;top:406.52px;width:38.60px;height:14.00px;line-height:14.00px;font-size:7.6px;background:#4aa9f2;color:#fff;">ภาษาไทย</div>
<div class="tag" style="left:597.5px;top:406.82px;width:23.20px;height:13.20px;line-height:13.20px;font-size:7.6px;background:#33c8b9;color:#fff;">中文</div>
<div class="tag" style="left:622.9px;top:406.82px;width:38.00px;height:13.20px;line-height:13.20px;font-size:7.6px;background:#22bb78;color:#fff;">繁體中文</div>
<div class="tag" style="left:663px;top:406.82px;width:29.40px;height:13.20px;line-height:13.20px;font-size:7.6px;background:#4aa9f2;color:#fff;">English</div>
<div class="tag" style="left:597.5px;top:420.12px;width:39.30px;height:13.40px;line-height:13.40px;font-size:7.6px;background:#f9a440;color:#fff;">ภาษาไทย</div>
<div class="tag" style="left:639.3px;top:420.12px;width:38.20px;height:13.40px;line-height:13.40px;font-size:7.6px;background:#fa6a6a;color:#fff;">ViệtName</div>
<div class="tag" style="left:721.5px;top:407.12px;width:32.50px;height:15.00px;line-height:15.00px;font-size:8.6px;background:#fa6a6a;color:#fff;">40.00</div>
<div class="t" style="left:796.8px;top:406.40px;height:14.24px;line-height:14.24px;font-size:8.9px;color:#585858;font-weight:normal;letter-spacing:-0.12px;">2022-10-09</div>
<div class="t" style="left:796.8px;top:419.30px;height:14.24px;line-height:14.24px;font-size:8.9px;color:#585858;font-weight:normal;letter-spacing:-0.12px;">20:41:01</div>
<div class="t" style="left:858.7px;top:406.40px;height:14.24px;line-height:14.24px;font-size:8.9px;color:#585858;font-weight:normal;letter-spacing:-0.12px;">2022-03-17</div>
<div class="t" style="left:858.7px;top:419.30px;height:14.24px;line-height:14.24px;font-size:8.9px;color:#585858;font-weight:normal;letter-spacing:-0.12px;">10:06:22</div>
<div class="b" style="left:920.4px;top:406.62000000000006px;width:37.10px;height:14.80px;border:1px solid #eceef1;border-radius:2px;background:#fff;"></div>
<div class="b" style="left:938.3px;top:406.62000000000006px;width:1.00px;height:14.80px;background:#eceef1;"></div>
<svg style="left:920px;top:406.62px" width="38" height="15"><path d="M7.6 9.6 L12 5.2" stroke="#5a5f6a" stroke-width="1.5" stroke-linecap="round"/><path d="M26.3 5.5 L30.3 9.5 M30.3 5.5 L26.3 9.5" stroke="#7d8590" stroke-width="0.85"/></svg>
<div class="b" style="left:176.7px;top:446.25000000000006px;width:11.00px;height:11.00px;border:1px solid #e2e2e2;background:#fff;border-radius:1px;"></div>
<div class="t" style="left:214.8px;top:445.53px;height:14.24px;line-height:14.24px;font-size:8.9px;color:#585858;font-weight:normal;letter-spacing:-0.12px;">1305</div>
<div class="t" style="left:274.4px;top:445.53px;height:14.24px;line-height:14.24px;font-size:8.9px;color:#585858;font-weight:normal;letter-spacing:-0.12px;transform:scaleX(0.88);transform-origin:0 0;">AG4</div>
<div class="t" style="left:341.9px;top:445.53px;height:14.24px;line-height:14.24px;font-size:8.9px;color:#585858;font-weight:normal;letter-spacing:-0.12px;">AG trò chơi</div>
<div class="tag" style="left:476px;top:445.65px;width:22.40px;height:14.00px;line-height:14.00px;font-size:7.6px;background:#22bb78;color:#fff;">开启</div>
<div class="tag" style="left:535.5px;top:445.65px;width:38.70px;height:14.00px;line-height:14.00px;font-size:7.6px;background:#f9a440;color:#fff;">ViệtName</div>
<div class="tag" style="left:597.5px;top:445.95px;width:23.20px;height:13.20px;line-height:13.20px;font-size:7.6px;background:#33c8b9;color:#fff;">中文</div>
<div class="tag" style="left:622.9px;top:445.95px;width:38.00px;height:13.20px;line-height:13.20px;font-size:7.6px;background:#22bb78;color:#fff;">繁體中文</div>
<div class="tag" style="left:663px;top:445.95px;width:29.40px;height:13.20px;line-height:13.20px;font-size:7.6px;background:#4aa9f2;color:#fff;">English</div>
<div class="tag" style="left:597.5px;top:459.25px;width:39.30px;height:13.40px;line-height:13.40px;font-size:7.6px;background:#f9a440;color:#fff;">ภาษาไทย</div>
<div class="tag" style="left:639.3px;top:459.25px;width:38.20px;height:13.40px;line-height:13.40px;font-size:7.6px;background:#fa6a6a;color:#fff;">ViệtName</div>
<div class="tag" style="left:721.5px;top:446.25px;width:27.70px;height:15.00px;line-height:15.00px;font-size:8.6px;background:#fa6a6a;color:#fff;">0.00</div>
<div class="t" style="left:796.8px;top:445.53px;height:14.24px;line-height:14.24px;font-size:8.9px;color:#585858;font-weight:normal;letter-spacing:-0.12px;">2022-10-09</div>
<div class="t" style="left:796.8px;top:458.43px;height:14.24px;line-height:14.24px;font-size:8.9px;color:#585858;font-weight:normal;letter-spacing:-0.12px;">20:41:01</div>
<div class="t" style="left:858.7px;top:445.53px;height:14.24px;line-height:14.24px;font-size:8.9px;color:#585858;font-weight:normal;letter-spacing:-0.12px;">2022-03-17</div>
<div class="t" style="left:858.7px;top:458.43px;height:14.24px;line-height:14.24px;font-size:8.9px;color:#585858;font-weight:normal;letter-spacing:-0.12px;">10:06:47</div>
<div class="b" style="left:920.4px;top:445.75000000000006px;width:37.10px;height:14.80px;border:1px solid #eceef1;border-radius:2px;background:#fff;"></div>
<div class="b" style="left:938.3px;top:445.75000000000006px;width:1.00px;height:14.80px;background:#eceef1;"></div>
<svg style="left:920px;top:445.75px" width="38" height="15"><path d="M7.6 9.6 L12 5.2" stroke="#5a5f6a" stroke-width="1.5" stroke-linecap="round"/><path d="M26.3 5.5 L30.3 9.5 M30.3 5.5 L26.3 9.5" stroke="#7d8590" stroke-width="0.85"/></svg>
<div class="b" style="left:176.7px;top:485.38000000000005px;width:11.00px;height:11.00px;border:1px solid #e2e2e2;background:#fff;border-radius:1px;"></div>
<div class="t" style="left:214.8px;top:484.66px;height:14.24px;line-height:14.24px;font-size:8.9px;color:#585858;font-weight:normal;letter-spacing:-0.12px;">1306</div>
<div class="t" style="left:274.4px;top:484.66px;height:14.24px;line-height:14.24px;font-size:8.9px;color:#585858;font-weight:normal;letter-spacing:-0.12px;">BBIN</div>
<div class="t" style="left:341.9px;top:484.66px;height:14.24px;line-height:14.24px;font-size:8.9px;color:#585858;font-weight:normal;letter-spacing:-0.12px;">BB宝盈</div>
<div class="tag" style="left:476px;top:484.78px;width:22.40px;height:14.00px;line-height:14.00px;font-size:7.6px;background:#22bb78;color:#fff;">开启</div>
<div class="tag" style="left:535.5px;top:484.78px;width:22.50px;height:14.00px;line-height:14.00px;font-size:7.6px;background:#f2f3f5;color:#999;">中文</div>
<div class="tag" style="left:597.5px;top:485.08px;width:23.20px;height:13.20px;line-height:13.20px;font-size:7.6px;background:#33c8b9;color:#fff;">中文</div>
<div class="tag" style="left:622.9px;top:485.08px;width:38.00px;height:13.20px;line-height:13.20px;font-size:7.6px;background:#22bb78;color:#fff;">繁體中文</div>
<div class="tag" style="left:663px;top:485.08px;width:29.40px;height:13.20px;line-height:13.20px;font-size:7.6px;background:#4aa9f2;color:#fff;">English</div>
<div class="tag" style="left:597.5px;top:498.38px;width:39.30px;height:13.40px;line-height:13.40px;font-size:7.6px;background:#f9a440;color:#fff;">ภาษาไทย</div>
<div class="tag" style="left:639.3px;top:498.38px;width:38.20px;height:13.40px;line-height:13.40px;font-size:7.6px;background:#fa6a6a;color:#fff;">ViệtName</div>
<div class="tag" style="left:721.5px;top:485.38px;width:27.70px;height:15.00px;line-height:15.00px;font-size:8.6px;background:#fa6a6a;color:#fff;">0.00</div>
<div class="t" style="left:796.8px;top:484.66px;height:14.24px;line-height:14.24px;font-size:8.9px;color:#585858;font-weight:normal;letter-spacing:-0.12px;">2022-10-09</div>
<div class="t" style="left:796.8px;top:497.56px;height:14.24px;line-height:14.24px;font-size:8.9px;color:#585858;font-weight:normal;letter-spacing:-0.12px;">20:41:01</div>
<div class="t" style="left:858.7px;top:484.66px;height:14.24px;line-height:14.24px;font-size:8.9px;color:#585858;font-weight:normal;letter-spacing:-0.12px;">2022-03-17</div>
<div class="t" style="left:858.7px;top:497.56px;height:14.24px;line-height:14.24px;font-size:8.9px;color:#585858;font-weight:normal;letter-spacing:-0.12px;">15:11:37</div>
<div class="b" style="left:920.4px;top:484.88000000000005px;width:37.10px;height:14.80px;border:1px solid #eceef1;border-radius:2px;background:#fff;"></div>
<div class="b" style="left:938.3px;top:484.88000000000005px;width:1.00px;height:14.80px;background:#eceef1;"></div>
<svg style="left:920px;top:484.88px" width="38" height="15"><path d="M7.6 9.6 L12 5.2" stroke="#5a5f6a" stroke-width="1.5" stroke-linecap="round"/><path d="M26.3 5.5 L30.3 9.5 M30.3 5.5 L26.3 9.5" stroke="#7d8590" stroke-width="0.85"/></svg>
<div class="b" style="left:176.7px;top:524.51px;width:11.00px;height:11.00px;border:1px solid #e2e2e2;background:#fff;border-radius:1px;"></div>
<div class="t" style="left:214.8px;top:523.79px;height:14.24px;line-height:14.24px;font-size:8.9px;color:#585858;font-weight:normal;letter-spacing:-0.12px;">1307</div>
<div class="t" style="left:274.4px;top:523.79px;height:14.24px;line-height:14.24px;font-size:8.9px;color:#585858;font-weight:normal;letter-spacing:-0.12px;">BBIN2</div>
<div class="t" style="left:341.9px;top:523.79px;height:14.24px;line-height:14.24px;font-size:8.9px;color:#585858;font-weight:normal;letter-spacing:-0.12px;">BB寶盈</div>
<div class="tag" style="left:476px;top:523.91px;width:22.40px;height:14.00px;line-height:14.00px;font-size:7.6px;background:#22bb78;color:#fff;">开启</div>
<div class="tag" style="left:535.5px;top:523.91px;width:38.20px;height:14.00px;line-height:14.00px;font-size:7.6px;background:#33c8b9;color:#fff;">繁體中文</div>
<div class="tag" style="left:597.5px;top:524.21px;width:23.20px;height:13.20px;line-height:13.20px;font-size:7.6px;background:#33c8b9;color:#fff;">中文</div>
<div class="tag" style="left:622.9px;top:524.21px;width:38.00px;height:13.20px;line-height:13.20px;font-size:7.6px;background:#22bb78;color:#fff;">繁體中文</div>
<div class="tag" style="left:663px;top:524.21px;width:29.40px;height:13.20px;line-height:13.20px;font-size:7.6px;background:#4aa9f2;color:#fff;">English</div>
<div class="tag" style="left:597.5px;top:537.51px;width:39.30px;height:13.40px;line-height:13.40px;font-size:7.6px;background:#f9a440;color:#fff;">ภาษาไทย</div>
<div class="tag" style="left:639.3px;top:537.51px;width:38.20px;height:13.40px;line-height:13.40px;font-size:7.6px;background:#fa6a6a;color:#fff;">ViệtName</div>
<div class="tag" style="left:721.5px;top:524.51px;width:27.70px;height:15.00px;line-height:15.00px;font-size:8.6px;background:#fa6a6a;color:#fff;">0.00</div>
<div class="t" style="left:796.8px;top:523.79px;height:14.24px;line-height:14.24px;font-size:8.9px;color:#585858;font-weight:normal;letter-spacing:-0.12px;">2022-10-09</div>
<div class="t" style="left:796.8px;top:536.69px;height:14.24px;line-height:14.24px;font-size:8.9px;color:#585858;font-weight:normal;letter-spacing:-0.12px;">20:41:01</div>
<div class="t" style="left:858.7px;top:523.79px;height:14.24px;line-height:14.24px;font-size:8.9px;color:#585858;font-weight:normal;letter-spacing:-0.12px;">2022-03-17</div>
<div class="t" style="left:858.7px;top:536.69px;height:14.24px;line-height:14.24px;font-size:8.9px;color:#585858;font-weight:normal;letter-spacing:-0.12px;">15:12:46</div>
<div class="b" style="left:920.4px;top:524.01px;width:37.10px;height:14.80px;border:1px solid #eceef1;border-radius:2px;background:#fff;"></div>
<div class="b" style="left:938.3px;top:524.01px;width:1.00px;height:14.80px;background:#eceef1;"></div>
<svg style="left:920px;top:524.01px" width="38" height="15"><path d="M7.6 9.6 L12 5.2" stroke="#5a5f6a" stroke-width="1.5" stroke-linecap="round"/><path d="M26.3 5.5 L30.3 9.5 M30.3 5.5 L26.3 9.5" stroke="#7d8590" stroke-width="0.85"/></svg>
<div class="b" style="left:176.7px;top:563.64px;width:11.00px;height:11.00px;border:1px solid #e2e2e2;background:#fff;border-radius:1px;"></div>
<div class="t" style="left:214.8px;top:562.92px;height:14.24px;line-height:14.24px;font-size:8.9px;color:#585858;font-weight:normal;letter-spacing:-0.12px;">1308</div>
<div class="t" style="left:274.4px;top:562.92px;height:14.24px;line-height:14.24px;font-size:8.9px;color:#585858;font-weight:normal;letter-spacing:-0.12px;">BBIN1</div>
<div class="t" style="left:341.9px;top:562.92px;height:14.24px;line-height:14.24px;font-size:8.9px;color:#585858;font-weight:normal;letter-spacing:-0.12px;transform:scaleX(0.92);transform-origin:0 0;">BB Game</div>
<div class="tag" style="left:476px;top:563.04px;width:22.40px;height:14.00px;line-height:14.00px;font-size:7.6px;background:#22bb78;color:#fff;">开启</div>
<div class="tag" style="left:535.5px;top:563.04px;width:30.30px;height:14.00px;line-height:14.00px;font-size:7.6px;background:#22bb78;color:#fff;">English</div>
<div class="tag" style="left:597.5px;top:563.34px;width:23.20px;height:13.20px;line-height:13.20px;font-size:7.6px;background:#33c8b9;color:#fff;">中文</div>
<div class="tag" style="left:622.9px;top:563.34px;width:38.00px;height:13.20px;line-height:13.20px;font-size:7.6px;background:#22bb78;color:#fff;">繁體中文</div>
<div class="tag" style="left:663px;top:563.34px;width:29.40px;height:13.20px;line-height:13.20px;font-size:7.6px;background:#4aa9f2;color:#fff;">English</div>
<div class="tag" style="left:597.5px;top:576.64px;width:39.30px;height:13.40px;line-height:13.40px;font-size:7.6px;background:#f9a440;color:#fff;">ภาษาไทย</div>
<div class="tag" style="left:639.3px;top:576.64px;width:38.20px;height:13.40px;line-height:13.40px;font-size:7.6px;background:#fa6a6a;color:#fff;">ViệtName</div>
<div class="tag" style="left:721.5px;top:563.64px;width:27.70px;height:15.00px;line-height:15.00px;font-size:8.6px;background:#fa6a6a;color:#fff;">0.00</div>
<div class="t" style="left:796.8px;top:562.92px;height:14.24px;line-height:14.24px;font-size:8.9px;color:#585858;font-weight:normal;letter-spacing:-0.12px;">2022-10-09</div>
<div class="t" style="left:796.8px;top:575.82px;height:14.24px;line-height:14.24px;font-size:8.9px;color:#585858;font-weight:normal;letter-spacing:-0.12px;">20:41:01</div>
<div class="t" style="left:858.7px;top:562.92px;height:14.24px;line-height:14.24px;font-size:8.9px;color:#585858;font-weight:normal;letter-spacing:-0.12px;">2022-03-17</div>
<div class="t" style="left:858.7px;top:575.82px;height:14.24px;line-height:14.24px;font-size:8.9px;color:#585858;font-weight:normal;letter-spacing:-0.12px;">15:12:46</div>
<div class="b" style="left:920.4px;top:563.14px;width:37.10px;height:14.80px;border:1px solid #eceef1;border-radius:2px;background:#fff;"></div>
<div class="b" style="left:938.3px;top:563.14px;width:1.00px;height:14.80px;background:#eceef1;"></div>
<svg style="left:920px;top:563.14px" width="38" height="15"><path d="M7.6 9.6 L12 5.2" stroke="#5a5f6a" stroke-width="1.5" stroke-linecap="round"/><path d="M26.3 5.5 L30.3 9.5 M30.3 5.5 L26.3 9.5" stroke="#7d8590" stroke-width="0.85"/></svg>
<div class="b" style="left:176.7px;top:602.77px;width:11.00px;height:11.00px;border:1px solid #e2e2e2;background:#fff;border-radius:1px;"></div>
<div class="t" style="left:806px;top:543px;font-size:13.1px;line-height:18px;color:rgba(110,110,110,0.42);">激活 Windows</div>
<div class="t" style="left:806px;top:559.8px;font-size:9.4px;line-height:14px;color:rgba(110,110,110,0.42);">转到“控制面板”中的“系统”以激活 Windows。</div>
</div></body></html>
